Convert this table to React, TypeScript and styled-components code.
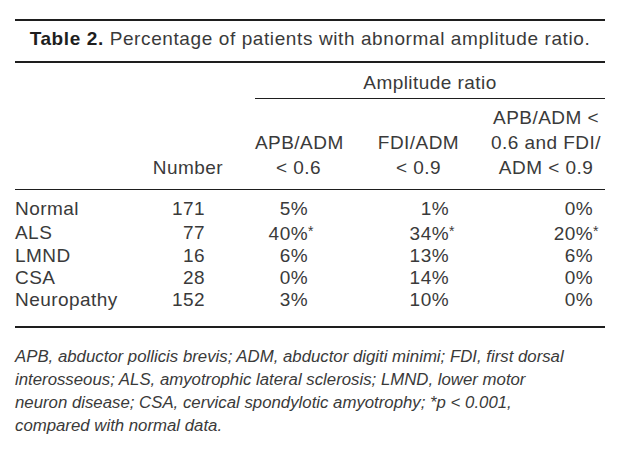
import React from "react";
import styled, { createGlobalStyle } from "styled-components";

const Global = createGlobalStyle`
  html, body { margin: 0; padding: 0; background: #ffffff; }
  body { font-family: "Liberation Sans", Arial, sans-serif; color: #3a3a3a; }
`;

const Page = styled.div`
  width: 590px;
  padding: 19px 14px 0 15px;
`;

const Caption = styled.div`
  border-top: 2px solid #1e1e1e;
  border-bottom: 2px solid #1e1e1e;
  padding: 6px 0 10px 0;
  line-height: 24px;
  font-size: 19px;
  letter-spacing: 0.6px;
  text-align: center;
  color: #3a3a3a;
`;

const CaptionLabel = styled.b`
  font-weight: 700;
  color: #1e1e1e;
`;

const Table = styled.table`
  width: 590px;
  border-collapse: collapse;
  table-layout: fixed;
  font-size: 19px;
  letter-spacing: 0.45px;
`;

const GroupHead = styled.th`
  font-weight: 400;
  text-align: center;
  line-height: 24px;
  padding: 8px 0 3px 0;
  border-bottom: 1px solid #1e1e1e;
`;

const EmptyHead = styled.th`
  padding: 0;
`;

const ColHead = styled.th<{ $align?: string; $pl?: number; $pr?: number }>`
  font-weight: 400;
  vertical-align: bottom;
  text-align: ${(p) => p.$align || "center"};
  line-height: 25px;
  padding: 6px ${(p) => p.$pr ?? 0}px 9px ${(p) => p.$pl ?? 0}px;
  border-bottom: 1px solid #1e1e1e;
  white-space: nowrap;
`;

const Body = styled.tbody`
  border-bottom: 2px solid #1e1e1e;
`;

const Row = styled.tr<{ $first?: boolean; $last?: boolean }>`
  td {
    padding-top: ${(p) => (p.$first ? 8 : 0)}px;
    padding-bottom: ${(p) => (p.$last ? 15 : 0)}px;
  }
`;

const Cell = styled.td<{ $align?: string; $pr?: number }>`
  line-height: 22px;
  text-align: ${(p) => p.$align || "right"};
  padding-left: 0;
  padding-right: ${(p) => p.$pr ?? 0}px;
  white-space: nowrap;
`;

const Star = styled.span`
  display: inline-block;
  width: 0;
  overflow: visible;
  font-size: 14px;
  vertical-align: 4px;
`;

const Footnote = styled.p`
  margin: 17px 0 0 0;
  font-size: 16.8px;
  line-height: 23px;
  font-style: italic;
  color: #3a3a3a;
`;

const cols = [135, 105, 87, 145, 118];

type Data = { name: string; n: number; v: [string, string, string]; star?: boolean };

const rows: Data[] = [
  { name: "Normal", n: 171, v: ["5%", "1%", "0%"] },
  { name: "ALS", n: 77, v: ["40%", "34%", "20%"], star: true },
  { name: "LMND", n: 16, v: ["6%", "13%", "6%"] },
  { name: "CSA", n: 28, v: ["0%", "14%", "0%"] },
  { name: "Neuropathy", n: 152, v: ["3%", "10%", "0%"] },
];

const pr = [34, 38, 12];

export default function App() {
  return (
    <Page>
      <Global />
      <Caption>
        <CaptionLabel>Table 2.</CaptionLabel> Percentage of patients with abnormal amplitude ratio.
      </Caption>
      <Table>
        <colgroup>
          {cols.map((w, i) => (
            <col key={i} style={{ width: w }} />
          ))}
        </colgroup>
        <thead>
          <tr>
            <EmptyHead />
            <EmptyHead />
            <GroupHead colSpan={3}>Amplitude ratio</GroupHead>
          </tr>
          <tr>
            <ColHead />
            <ColHead $align="right" $pr={32}>Number</ColHead>
            <ColHead>
              APB/ADM
              <br />
              &lt; 0.6
            </ColHead>
            <ColHead $pl={8}>
              FDI/ADM
              <br />
              &lt; 0.9
            </ColHead>
            <ColHead $pl={0}>
              APB/ADM &lt;
              <br />
              0.6 and FDI/
              <br />
              ADM &lt; 0.9
            </ColHead>
          </tr>
        </thead>
        <Body>
          {rows.map((r, i) => (
            <Row key={r.name} $first={i === 0} $last={i === rows.length - 1}>
              <Cell $align="left">{r.name}</Cell>
              <Cell $pr={50}>{r.n}</Cell>
              {r.v.map((v, j) => (
                <Cell key={j} $pr={pr[j]}>
                  {v}
                  {r.star && <Star>*</Star>}
                </Cell>
              ))}
            </Row>
          ))}
        </Body>
      </Table>
      <Footnote>
        APB, abductor pollicis brevis; ADM, abductor digiti minimi; FDI, first dorsal
        <br />
        interosseous; ALS, amyotrophic lateral sclerosis; LMND, lower motor
        <br />
        neuron disease; CSA, cervical spondylotic amyotrophy; *p &lt; 0.001,
        <br />
        compared with normal data.
      </Footnote>
    </Page>
  );
}
